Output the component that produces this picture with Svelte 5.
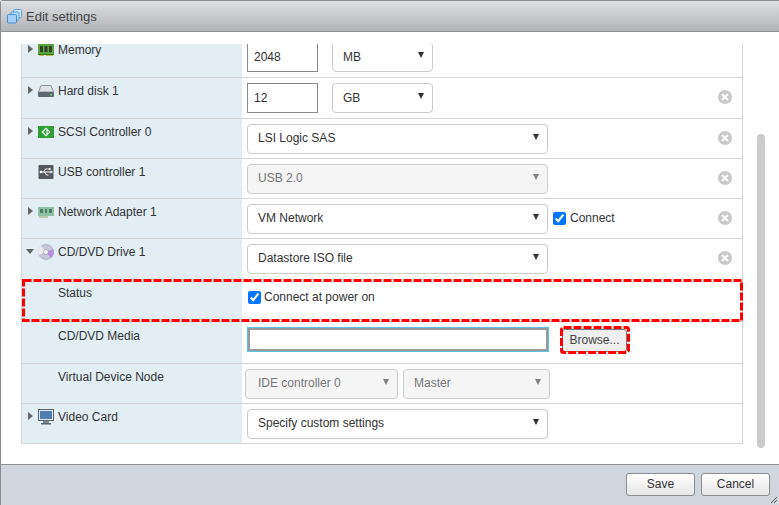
<script>
</script>

{#snippet caret(open)}
    <span class="caret" class:open></span>
{/snippet}

{#snippet remove()}
    <svg class="remove" width="16" height="16" viewBox="0 0 16 16">
        <circle cx="8" cy="8" r="7" fill="#c9c9c9" />
        <path d="M5 5l6 6M11 5l-6 6" stroke="#fff" stroke-width="2" />
    </svg>
{/snippet}

{#snippet dropdown(text, cls, disabled)}
    <span class="select {cls}" class:disabled>
        <select {disabled}><option>{text}</option></select>
    </span>
{/snippet}

<div class="window">
    <header class="title">
        <svg width="16" height="15" viewBox="0 0 16 15">
            <rect x="6.5" y=".5" width="8" height="8" rx="1" fill="#d4e8f9" stroke="#5aa3e0" />
            <rect x="4" y="3" width="8" height="8" rx="1" fill="#bcdcf6" stroke="#4f9bdc" />
            <rect x=".5" y="5.5" width="9" height="8.5" rx="1" fill="#a5cff2" stroke="#438fd4" />
        </svg>
        <span>Edit settings</span>
    </header>

    <main class="content">
        <div class="viewport">
            <div class="table">
                <div class="row memory">
                    <div class="label">
                        {@render caret(false)}
                        <svg class="ico i-mem" width="16" height="12" viewBox="0 0 16 12">
                            <rect y="0" width="16" height="10" fill="#5aa63c" />
                            <rect x="2" y="2" width="3" height="6" fill="#33402c" />
                            <rect x="6.5" y="2" width="3" height="6" fill="#33402c" />
                            <rect x="11" y="2" width="3" height="6" fill="#33402c" />
                            <rect y="10" width="16" height="1" fill="#2f7a20" />
                            <rect x="1" y="11" width="5" height="1" fill="#c9b64a" />
                            <rect x="8" y="11" width="7" height="1" fill="#c9b64a" />
                        </svg>
                        Memory
                    </div>
                    <div class="field">
                        <input class="num" value="2048" />
                        {@render dropdown("MB", "unit")}
                    </div>
                </div>

                <div class="row disk">
                    <div class="label">
                        {@render caret(false)}
                        <svg class="ico i-disk" width="16" height="12" viewBox="0 0 16 12">
                            <path d="M3 .5h10l2.5 6.5H.5z" fill="#dfe3e8" stroke="#8b929a" />
                            <rect y="7" width="16" height="5" rx="1" fill="#5f6770" />
                            <rect x="12" y="9" width="2" height="1.5" fill="#7fd05a" />
                        </svg>
                        Hard disk 1
                    </div>
                    <div class="field">
                        <input class="num" value="12" />
                        {@render dropdown("GB", "unit")}
                        {@render remove()}
                    </div>
                </div>

                <div class="row scsi">
                    <div class="label">
                        {@render caret(false)}
                        <svg class="ico i-scsi" width="16" height="12" viewBox="0 0 16 12">
                            <rect width="16" height="12" fill="#2f9e37" />
                            <path d="M8 1.5l4.5 4.5L8 10.5 3.5 6z" fill="#fff" />
                            <path d="M8.5 3.5L6 6l2.5 2.5M6 6h5" fill="none" stroke="#2f9e37" stroke-width="1.2" />
                        </svg>
                        SCSI Controller 0
                    </div>
                    <div class="field">
                        {@render dropdown("LSI Logic SAS", "wide")}
                        {@render remove()}
                    </div>
                </div>

                <div class="row">
                    <div class="label">
                        <span class="caret none"></span>
                        <svg class="ico" width="15" height="14" viewBox="0 0 15 14">
                            <rect width="15" height="14" rx="1" fill="#55585c" />
                            <path d="M2 7h11M5 7l2-3h2M6 7l2 3h2" fill="none" stroke="#fff" />
                            <rect x="10" y="3" width="2" height="2" fill="#fff" />
                            <circle cx="2.5" cy="7" r="1.3" fill="#fff" />
                            <path d="M12 5.5L14.5 7 12 8.5z" fill="#fff" />
                        </svg>
                        USB controller 1
                    </div>
                    <div class="field">
                        {@render dropdown("USB 2.0", "wide", true)}
                        {@render remove()}
                    </div>
                </div>

                <div class="row">
                    <div class="label">
                        {@render caret(false)}
                        <svg class="ico i-net" width="16" height="11" viewBox="0 0 16 11">
                            <rect width="16" height="9" fill="#8fc0a6" />
                            <rect x="2" y="2" width="3" height="4" fill="#4c7f68" />
                            <rect x="7" y="2" width="2" height="4" fill="#4c7f68" />
                            <rect x="11" y="2" width="3" height="4" fill="#4c7f68" />
                            <rect x="1" y="9" width="9" height="2" fill="#b7c9a6" />
                        </svg>
                        Network Adapter 1
                    </div>
                    <div class="field">
                        {@render dropdown("VM Network", "wide")}
                        <label class="check connect"><input type="checkbox" checked />Connect</label>
                        {@render remove()}
                    </div>
                </div>

                <div class="row cd">
                    <div class="label">
                        {@render caret(true)}
                        <svg class="ico i-cd" width="16" height="16" viewBox="0 0 16 16">
                            <circle cx="8" cy="8" r="7.5" fill="#c9c6dc" stroke="#9a9aa8" stroke-width=".6" />
                            <path d="M8 8L15 5A7.5 7.5 0 0 1 13 14z" fill="#b58fe0" />
                            <path d="M8 8L1 11A7.5 7.5 0 0 1 3 2z" fill="#eceaf4" />
                            <circle cx="8" cy="8" r="2.4" fill="#fff" stroke="#8f8fa0" stroke-width=".7" />
                        </svg>
                        CD/DVD Drive 1
                    </div>
                    <div class="field">
                        {@render dropdown("Datastore ISO file", "wide")}
                        {@render remove()}
                    </div>
                </div>

                <div class="row status">
                    <div class="label sub">Status</div>
                    <div class="field">
                        <label class="check"><input type="checkbox" checked />Connect at power on</label>
                    </div>
                    <svg class="mark" width="721" height="43" viewBox="0 0 721 43">
                        <rect x="1.5" y="1.5" width="718" height="40" />
                    </svg>
                </div>

                <div class="row media">
                    <div class="label sub">CD/DVD Media</div>
                    <div class="field">
                        <input class="path" />
                        <span class="browse-wrap">
                            <button class="browse">Browse...</button>
                            <svg class="mark" width="70" height="28" viewBox="0 0 70 28">
                                <rect x="1.5" y="1.5" width="67" height="25" rx="2" />
                            </svg>
                        </span>
                    </div>
                </div>

                <div class="row node">
                    <div class="label sub">Virtual Device Node</div>
                    <div class="field">
                        {@render dropdown("IDE controller 0", "ide", true)}
                        {@render dropdown("Master", "master", true)}
                    </div>
                </div>

                <div class="row video">
                    <div class="label">
                        {@render caret(false)}
                        <svg class="ico i-video" width="16" height="16" viewBox="0 0 16 16">
                            <rect x=".5" y=".5" width="15" height="11" fill="#e3e8ee" stroke="#5a6570" />
                            <rect x="2" y="2" width="12" height="8" fill="#4f7fae" />
                            <rect x="5" y="12" width="6" height="2" fill="#7d8b99" />
                            <rect x="3" y="14" width="10" height="1.5" fill="#4e6478" />
                        </svg>
                        Video Card
                    </div>
                    <div class="field">
                        {@render dropdown("Specify custom settings", "wide")}
                    </div>
                </div>
            </div>
        </div>
        <div class="scrollbar"></div>
    </main>

    <footer class="actions">
        <button>Save</button>
        <button>Cancel</button>
        <svg class="grip" width="6" height="6" viewBox="0 0 6 6">
            <path d="M0 6L6 0M3 6L6 3" stroke="#555" stroke-width="1" />
        </svg>
    </footer>
</div>

<style>
    :global(body) {
        margin: 0;
        overflow: hidden;
    }

    .window {
        box-sizing: border-box;
        width: 779px;
        height: 505px;
        display: flex;
        flex-direction: column;
        border-top: 1px solid #8c8c8c;
        border-left: 1px solid #8c8c8c;
        border-top-left-radius: 3px;
        font-family: "Liberation Sans", Arial, sans-serif;
        font-size: 12px;
        color: #333;
        background: #fff;
    }

    .title {
        box-sizing: border-box;
        height: 31px;
        display: flex;
        align-items: center;
        gap: 3px;
        padding-left: 6px;
        font-size: 13px;
        color: #444;
        background: linear-gradient(#dfe0e3, #b2b3b5);
        border-bottom: 1px solid #8f9090;
    }

    .content {
        flex: 1;
        display: flex;
        align-items: flex-start;
        padding: 12px 0 0 20px;
        min-height: 0;
    }

    .viewport {
        width: 722px;
        height: 400px;
        overflow: hidden;
    }

    .table {
        margin-top: -7px;
        border-left: 1px solid #d6d6d6;
        border-right: 1px solid #d6d6d6;
    }

    .scrollbar {
        width: 8px;
        height: 314px;
        margin: 90px 0 0 14px;
        border-radius: 4px;
        background: #ccc;
    }

    .row {
        box-sizing: border-box;
        height: 40px;
        display: grid;
        grid-template-columns: 220px 1fr;
        border-bottom: 1px solid #d6d6d6;
        position: relative;
    }

    .memory,
    .disk {
        height: 41px;
    }

    .cd {
        border-bottom: 0;
    }

    .status {
        height: 43px;
    }

    .media {
        height: 42px;
    }

    .mark {
        position: absolute;
        left: 0;
        top: 0;
        pointer-events: none;
    }

    .mark rect {
        fill: none;
        stroke: #f00;
        stroke-width: 3;
        stroke-dasharray: 8 2;
    }

    .label {
        display: flex;
        align-items: flex-start;
        padding: 6px 0 0 5px;
        background: #e2edf4;
        line-height: 14px;
    }

    .sub {
        padding-left: 36px;
    }

    .status .label,
    .media .label {
        padding-top: 7px;
    }

    .caret {
        width: 5px;
        height: 8px;
        margin: 2px 5px 0 1px;
        box-sizing: border-box;
        border-left: 5px solid #666;
        border-top: 4px solid transparent;
        border-bottom: 4px solid transparent;
    }

    .caret.open {
        width: 8px;
        height: 5px;
        margin: 4px 4px 0 -1px;
        border-top: 5px solid #666;
        border-left: 4px solid transparent;
        border-right: 4px solid transparent;
        border-bottom: 0;
    }

    .caret.none {
        border-color: transparent;
    }

    .ico {
        flex: none;
        width: 16px;
        margin-right: 4px;
    }

    .i-mem,
    .i-disk,
    .i-scsi {
        margin-top: 1px;
    }

    .i-net {
        margin-top: 2px;
    }

    .i-cd,
    .i-video {
        margin-top: -1px;
    }

    .field {
        display: flex;
        align-items: flex-start;
        padding: 5px 0 0 5px;
        position: relative;
    }

    .remove {
        position: absolute;
        right: 9px;
        top: 11px;
    }

    .memory .field,
    .disk .field {
        gap: 14px;
    }

    .select {
        position: relative;
        display: block;
    }

    .select select {
        box-sizing: border-box;
        appearance: none;
        width: 100%;
        height: 30px;
        padding: 0 10px;
        background: #fff;
        border: 1px solid #ccc;
        border-radius: 4px;
        font: inherit;
        color: #333;
    }

    .wide select,
    .ide select,
    .master select {
        padding-bottom: 2px;
    }

    .ide select {
        padding-left: 12px;
    }

    .select::after {
        content: "";
        position: absolute;
        right: 9px;
        top: 10px;
        border-top: 6px solid #333;
        border-left: 3.5px solid transparent;
        border-right: 3.5px solid transparent;
    }

    .select.disabled select {
        background: #f5f5f5;
        color: #777;
        opacity: 1;
    }

    .select.disabled::after {
        border-top-color: #808080;
    }

    .wide {
        width: 301px;
    }

    .unit {
        width: 101px;
    }

    .ide {
        width: 153px;
        margin-left: -2px;
    }

    .master {
        width: 147px;
        margin-left: 5px;
    }

    .num {
        box-sizing: border-box;
        width: 71px;
        height: 30px;
        padding: 0 6px;
        border: 1px solid #8a8a8a;
        font: inherit;
        color: #333;
    }

    .check {
        display: flex;
        align-items: center;
        gap: 3px;
        height: 14px;
        margin: 5px 0 0 1px;
    }

    .check input {
        margin: 0;
        accent-color: #0075ff;
    }

    .status .check {
        margin-top: 6px;
    }

    .connect {
        margin: 7px 0 0 5px;
        gap: 4px;
    }

    .path {
        box-sizing: border-box;
        width: 302px;
        height: 25px;
        border: 1px solid #5bc0e8;
        box-shadow: inset 0 0 0 2px #9a9a9a;
        outline: none;
    }

    .browse-wrap {
        position: relative;
        display: block;
        width: 70px;
        height: 28px;
        margin: -1px 0 0 11px;
    }

    .browse {
        box-sizing: border-box;
        display: block;
        width: 65px;
        height: 23px;
        margin: 3px 0 0 2px;
        padding: 0 0 2px;
        background: #efefef;
        border: 1px solid #767676;
        border-radius: 3px;
        font: inherit;
        color: #444;
    }

    .actions {
        box-sizing: border-box;
        height: 41px;
        display: flex;
        justify-content: flex-end;
        gap: 6px;
        padding: 8px 9px 0 0;
        background: #d0d6de;
        border-top: 1px solid #8e9091;
        position: relative;
    }

    .actions button {
        box-sizing: border-box;
        width: 69px;
        height: 23px;
        padding: 0 0 2px;
        background: linear-gradient(#fff, #e6e6e6);
        border: 1px solid #8c8c8c;
        border-radius: 3px;
        font: inherit;
        color: #333;
    }

    .grip {
        position: absolute;
        right: 2px;
        bottom: 2px;
    }
</style>
